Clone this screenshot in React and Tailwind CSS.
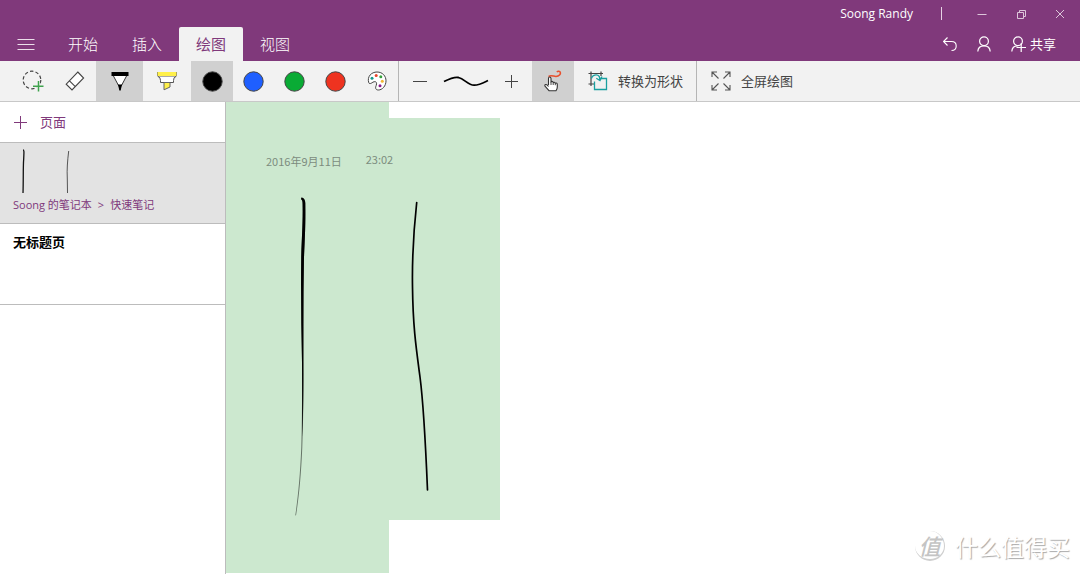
import { useState } from "react";

const FONT = "font-['Open_Sans','Noto_Sans_CJK_SC',sans-serif]";

const TABS = ["开始", "插入", "绘图", "视图"];

const COLORS = [
  { name: "黑色", fill: "#000000", width: "w-[42px]" },
  { name: "蓝色", fill: "#1f5fff", width: "w-[41px]" },
  { name: "绿色", fill: "#0aab35", width: "w-[41px]" },
  { name: "红色", fill: "#ee3320", width: "w-[41px]" },
];

function Icon({ w, h, children }) {
  return (
    <svg width={w} height={h} viewBox={`0 0 ${w} ${h}`} fill="none" aria-hidden="true" className="shrink-0">
      {children}
    </svg>
  );
}

function ToolButton({ label, active, width, onClick, children }) {
  return (
    <button
      type="button"
      aria-label={label}
      onClick={onClick}
      className={`${width} flex items-center justify-center ${active ? "bg-[#d0d0d0]" : "hover:bg-[#e4e4e4]"}`}
    >
      {children}
    </button>
  );
}

function LassoIcon() {
  return (
    <Icon w={22} h={22}>
      <circle cx="10" cy="10" r="8.8" stroke="#444" strokeWidth="1.2" strokeDasharray="3.4 2.2" />
      <path d="M16.5 11v10.5M11 16.3h10.5" stroke="#f2f2f2" strokeWidth="3" />
      <path d="M16.5 11v10.5M11 16.3h10.5" stroke="#3fa34d" strokeWidth="1.5" />
    </Icon>
  );
}

function EraserIcon() {
  return (
    <Icon w={20} h={20}>
      <path d="M12.8 1L18.6 7L7 19L1.2 13.2ZM4.5 9.8L10.3 15.6" stroke="#444" strokeWidth="1.1" fill="#fff" />
    </Icon>
  );
}

function PenIcon() {
  return (
    <Icon w={18} h={20}>
      <path d="M2.2 4.5L7.5 14.5H10.5L15.8 4.5Z" fill="#fff" stroke="#333" />
      <path d="M0.5 1H17.5V5H0.5Z" fill="#000" />
      <path d="M6.8 13.5H11.2L10.2 17L9.7 19.5H8.3L7.8 17Z" fill="#000" />
    </Icon>
  );
}

function HighlighterIcon() {
  return (
    <Icon w={20} h={20}>
      <path d="M1 5H19V5.5Q16.5 6 16.5 9.5V11.5H3.5V9.5Q3.5 6 1 5.5Z" fill="#fff" stroke="#555" />
      <path d="M7 11.5H13V16L7 18.8Z" fill="#fff04a" stroke="#666" />
      <path d="M0.5 1H19.5V5H0.5Z" fill="#fff04a" />
      <path d="M0.5 1V5M19.5 1V5" stroke="#8a8440" strokeWidth="0.7" />
    </Icon>
  );
}

function PaletteIcon() {
  return (
    <Icon w={20} h={20}>
      <path
        d="M1.8 11.8C-0.2 5.5 4.5 1 10 1C15.5 1 19 5 19 9.8C19 15 15.3 19 11.3 19C8.3 19 8.2 16.5 9.2 14.5C10.2 12 9.3 10.3 7.2 10.7C5.3 11.1 4.7 12.4 3.3 12.5C2.4 12.6 2 12.4 1.8 11.8Z"
        fill="#fff"
        stroke="#444"
      />
      <circle cx="5" cy="7.2" r="1.5" fill="#159a8c" />
      <circle cx="9.2" cy="4.6" r="1.5" fill="#e8452c" />
      <circle cx="13.8" cy="5.8" r="1.5" fill="#35a23c" />
      <circle cx="15.3" cy="10.3" r="1.5" fill="#f2b632" />
      <circle cx="13" cy="14.8" r="1.5" fill="#8b1a8b" />
    </Icon>
  );
}

function TouchIcon() {
  return (
    <Icon w={20} h={24}>
      <path d="M5.5 7.5C8 5.5 10.5 7.5 13 7.5C16 7.3 18 5.2 17.3 3.2C16.8 2 15 1.8 13.8 3" stroke="#e8502e" strokeWidth="1.6" />
      <path
        d="M5.5 16V9.5Q5.5 8 6.7 8T8 9.5V13Q8.5 12.2 9.4 12.5Q10.2 12.8 10.2 13.6Q11.5 12.6 12.3 14.2Q14.3 13.5 14.3 15.5V18Q14.3 20 13 21.8H6.2L2 17.2Q1.4 15.8 2.8 15.5Q4 15.3 5.5 17.5"
        fill="#fff"
        stroke="#333"
        strokeWidth="1.1"
        strokeLinejoin="round"
      />
      <path d="M8 13V16M10.2 13.6V16M12.3 14.2V16.2" stroke="#333" strokeWidth="0.9" />
    </Icon>
  );
}

function ConvertIcon() {
  return (
    <Icon w={20} h={20}>
      <path d="M3 0.5V15M0.5 2.5H15M13 0.5V5M0.5 13H6" stroke="#444" strokeWidth="1.2" />
      <path d="M11.5 7.5H18.5V18.5H6.5V10.5" fill="#f2f2f2" stroke="#1aa0a0" strokeWidth="1.3" />
      <path d="M3.5 7.5C4 4 9 2.5 11.3 5.5L12 9M8.3 7.2L12 9.5L14 5.5" stroke="#1aa0a0" strokeWidth="1.3" />
    </Icon>
  );
}

function FullscreenIcon() {
  return (
    <Icon w={20} h={20}>
      <path
        d="M1 6V1H6M1 1L7.5 7.5M14 1H19V6M19 1L12.5 7.5M1 14V19H6M1 19L7.5 12.5M14 19H19V14M19 19L12.5 12.5"
        stroke="#555"
        strokeWidth="1.1"
      />
    </Icon>
  );
}

function Header({ tab, setTab }) {
  return (
    <header className="bg-[#80397b] text-white">
      <div className="flex h-[27px] items-center justify-end pr-px">
        <span className="text-xs leading-4">Soong Randy</span>
        <span className="ml-7 h-[13px] w-px bg-[#e6d3e4]" />
        <div className="ml-5 flex h-full text-[#dcc6da]">
          <button type="button" aria-label="最小化" className="flex w-[39px] items-center justify-center">
            <Icon w={10} h={10}>
              <path d="M0.5 5.5H9.5" stroke="currentColor" />
            </Icon>
          </button>
          <button type="button" aria-label="还原" className="flex w-[39px] items-center justify-center">
            <Icon w={10} h={10}>
              <path d="M1.5 3.5H7.5V9.5H1.5ZM3.5 3.5V1.5H9.5V7.5H7.5" stroke="currentColor" />
            </Icon>
          </button>
          <button type="button" aria-label="关闭" className="flex w-[39px] items-center justify-center">
            <Icon w={10} h={10}>
              <path d="M1 1L9 9M9 1L1 9" stroke="currentColor" />
            </Icon>
          </button>
        </div>
      </div>

      <div className="flex h-[34px] items-stretch">
        <button type="button" aria-label="菜单" className="flex w-[51px] items-center justify-center">
          <Icon w={18} h={12}>
            <path d="M0.5 1.5H17.5M0.5 6.5H17.5M0.5 11.5H17.5" stroke="#ecdfeb" />
          </Icon>
        </button>
        <nav className="flex">
          {TABS.map((name) => (
            <button
              key={name}
              type="button"
              onClick={() => setTab(name)}
              className={`w-16 rounded-t-xs text-[15px] leading-5 ${
                tab === name ? "bg-[#f2f2f2] text-[#80397b]" : "font-light"
              }`}
            >
              {name}
            </button>
          ))}
        </nav>
        <div className="ml-auto flex items-center gap-5 pr-6">
          <button type="button" aria-label="撤消">
            <Icon w={14} h={16}>
              <path d="M4.5 1.5L0.5 5.5L4.5 9.5M0.5 5.5H8.5C11.5 5.5 13.2 7.5 13.2 10C13.2 12.5 11.5 14.5 8.5 14.5" stroke="#fff" strokeWidth="1.1" />
            </Icon>
          </button>
          <button type="button" aria-label="帐户">
            <Icon w={14} h={16}>
              <circle cx="7" cy="5.3" r="4.4" stroke="#fff" strokeWidth="1.2" />
              <path d="M0.8 15.5C1 11.5 3.5 9.8 7 9.8C10.5 9.8 13 11.5 13.2 15.5" stroke="#fff" strokeWidth="1.2" />
            </Icon>
          </button>
          <button type="button" className="flex items-center gap-1 text-[13px] leading-5">
            <Icon w={15} h={16}>
              <circle cx="7" cy="5.3" r="4.4" stroke="#fff" strokeWidth="1.2" />
              <path d="M0.8 15.5C1 12 3 9.8 6.5 9.8M10.2 7V16M5.5 11.5H15" stroke="#fff" strokeWidth="1.2" />
            </Icon>
            共享
          </button>
        </div>
      </div>
    </header>
  );
}

function Toolbar() {
  const [tool, setTool] = useState("pen");
  const [color, setColor] = useState("黑色");
  const [touch, setTouch] = useState(true);

  return (
    <div className="flex h-[41px] items-stretch border-b border-[#c8c8c8] bg-[#f2f2f2] pl-3 text-[13px] leading-5 text-[#444]">
      <ToolButton label="套索选择" width="w-[42px]" active={tool === "lasso"} onClick={() => setTool("lasso")}>
        <LassoIcon />
      </ToolButton>
      <ToolButton label="橡皮擦" width="w-[42px]" active={tool === "eraser"} onClick={() => setTool("eraser")}>
        <EraserIcon />
      </ToolButton>
      <ToolButton label="笔" width="w-[47px]" active={tool === "pen"} onClick={() => setTool("pen")}>
        <PenIcon />
      </ToolButton>
      <ToolButton label="荧光笔" width="w-12" active={tool === "marker"} onClick={() => setTool("marker")}>
        <HighlighterIcon />
      </ToolButton>

      {COLORS.map((c) => (
        <ToolButton key={c.name} label={c.name} width={c.width} active={color === c.name} onClick={() => setColor(c.name)}>
          <Icon w={21} h={21}>
            <circle cx="10.5" cy="10.5" r="9.7" fill={c.fill} stroke="#444" />
          </Icon>
        </ToolButton>
      ))}
      <ToolButton label="更多颜色" width="w-[42px]">
        <PaletteIcon />
      </ToolButton>

      <div className="flex border-l border-[#b5b5b5]">
        <ToolButton label="减小粗细" width="w-[41px]">
          <Icon w={14} h={14}>
            <path d="M0 7.5H14" stroke="#444" />
          </Icon>
        </ToolButton>
        <div className="flex w-[51px] items-center justify-center">
          <Icon w={46} h={14}>
            <path d="M1 7.5C6 5 11 2.5 15.5 3.5C21.5 5 25 11 31 11.2C36 11.3 40 9 45 6.5" stroke="#000" strokeWidth="1.8" />
          </Icon>
        </div>
        <ToolButton label="增大粗细" width="w-[41px]">
          <Icon w={13} h={13}>
            <path d="M0 6.5H13M6.5 0V13" stroke="#444" />
          </Icon>
        </ToolButton>
      </div>

      <ToolButton label="用触摸绘图" width="w-[42px]" active={touch} onClick={() => setTouch(!touch)}>
        <TouchIcon />
      </ToolButton>
      <button type="button" className="flex items-center gap-2.5 pr-[13px] pl-3.5">
        <ConvertIcon />
        转换为形状
      </button>
      <button type="button" className="flex items-center gap-2.5 border-l border-[#b5b5b5] px-3.5">
        <FullscreenIcon />
        全屏绘图
      </button>
    </div>
  );
}

function Sidebar() {
  return (
    <aside className="w-[226px] shrink-0 border-r border-[#bcbcbc] bg-white">
      <button type="button" className="flex h-10 w-full items-center gap-[13px] px-3.5 text-[13px] leading-5 text-[#80397b]">
        <Icon w={13} h={13}>
          <path d="M0 6.5H13M6.5 0V13" stroke="currentColor" />
        </Icon>
        页面
      </button>
      <ul>
        <li className="border-y border-[#bcbcbc] bg-[#e3e3e3]">
          <a href="#ink" className="block h-20 px-[13px] pt-1.5">
            <Icon w={64} h={46}>
              <path d="M10 1C11.5 1 10.8 5 10.7 10C10 18 10.5 30 10 44" stroke="#111" strokeWidth="1.3" />
              <path d="M55.7 2C54.5 12 53.8 20 54.3 30L54.5 44" stroke="#555" />
            </Icon>
            <span className="flex gap-1.5 text-[11px] leading-5 text-[#80397b]">
              <span>Soong 的笔记本</span>
              <span>&gt;</span>
              <span>快速笔记</span>
            </span>
          </a>
        </li>
        <li className="border-b border-[#bcbcbc]">
          <a href="#untitled" className="block h-20 px-[13px] pt-2 text-[13px] leading-5 font-bold text-black">
            无标题页
          </a>
        </li>
      </ul>
    </aside>
  );
}

function PageCanvas() {
  return (
    <main className="relative flex grow overflow-hidden bg-white pb-px">
      <div className="w-[163px] bg-[#cce8cf]" />
      <div className="mt-4 mb-[53px] w-[111px] bg-[#cce8cf]" />

      <div className="absolute top-[47px] left-10 flex gap-6 font-['Noto_Sans_CJK_SC',sans-serif] text-[11px] leading-5 text-[#7c8c7e]">
        <span className="pt-0.5">2016年9月11日</span>
        <span>23:02</span>
      </div>

      {/* ink strokes */}
      <svg width="274" height="472" viewBox="0 0 274 472" className="absolute top-0 left-0" aria-hidden="true">
        <path
          d="M75.5 95.5C78 96 79.5 98 79.3 102C79.6 120 79 135 78 155C77.4 190 77.6 225 77.4 260C77.6 290 77.3 320 76.3 345C75 375 73 395 70 413.5L69.3 413.3C72 395 74 375 75.3 345C76 320 76.2 290 76 260C75.2 225 74.8 190 75.2 155C75.8 135 77 120 76.6 102C76.6 99 76.3 98.3 75 97Z"
          fill="#000"
          fillOpacity="0.5"
        />
        <path
          d="M75.5 95.5C78 96 79.5 98 79.3 102C79.6 120 79 135 78 155C77.2 190 77.4 225 77.4 260C77.5 290 77.2 315 76.3 335C76.2 310 76.2 290 76 260C75.2 225 74.8 190 75.2 155C75.8 135 77 120 76.6 102C76.6 99 76.3 98.3 75 97Z"
          fill="#000"
        />
        <path
          d="M190.7 100.5C187.5 130 186 155 186.5 185C187 225 190 245 194 275C197.5 302 199.5 340 201.5 388"
          fill="none"
          stroke="#000"
          strokeWidth="1.7"
          strokeLinecap="round"
        />
      </svg>

      <div className="absolute right-2.5 bottom-3 flex items-center gap-2.5 font-['Noto_Sans_CJK_SC',sans-serif] select-none">
        <span className="flex size-[30px] items-center justify-center rounded-full border-r border-b-2 border-[#cfcfcf] text-[22px] leading-none font-medium text-[#c4c4c4] italic">
          值
        </span>
        <span className="text-[23px] leading-8 text-white [text-shadow:1px_1px_1px_#a8a8a8]">什么值得买</span>
      </div>
    </main>
  );
}

function App() {
  const [tab, setTab] = useState("绘图");

  return (
    <div className={`flex min-h-screen flex-col bg-white ${FONT}`}>
      <Header tab={tab} setTab={setTab} />
      <Toolbar />
      <div className="flex grow">
        <Sidebar />
        <PageCanvas />
      </div>
    </div>
  );
}

export default App;
